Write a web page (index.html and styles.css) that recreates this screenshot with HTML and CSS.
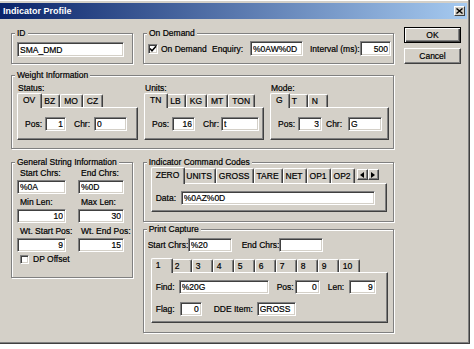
FILE: index.html
```html
<!DOCTYPE html>
<html lang="en">
<head>
    <meta charset="UTF-8">
    <title>Indicator Profile</title>
    <link rel="stylesheet" href="styles.css">
</head>
<body>
<div class="window">
    <div class="titlebar">
        <span class="title">Indicator Profile</span>
        <span class="close-btn">
            <svg width="7" height="6" viewBox="0 0 7 6"><path d="M0.5 0.5 L6.5 5.5 M6.5 0.5 L0.5 5.5" stroke="#000" stroke-width="1.4"/></svg>
        </span>
    </div>

    <div class="client">
        <div class="main">
            <!-- ID / On Demand -->
            <div class="row">
                <div class="group g-id">
                    <span class="legend">ID</span>
                    <input class="tb tb-id" value="SMA_DMD">
                </div>
                <div class="group g-demand">
                    <span class="legend">On Demand</span>
                    <span class="check">
                        <svg width="8" height="8" viewBox="0 0 8 8"><path d="M1 3.5 L3 5.8 L7 1.2" fill="none" stroke="#000" stroke-width="1.5"/></svg>
                    </span>
                    <span class="lbl l-ondemand">On Demand</span>
                    <span class="lbl l-enquiry">Enquiry:</span>
                    <input class="tb tb-enquiry" value="%0AW%0D">
                    <span class="lbl l-interval">Interval (ms):</span>
                    <input class="tb num tb-interval" value="500">
                </div>
            </div>

            <!-- Weight Information -->
            <div class="group g-weight">
                <span class="legend">Weight Information</span>
                <div class="sub sub-status">
                    <div class="sub-label">Status:</div>
                    <div class="tabs">
                        <span class="tab active">OV</span>
                        <span class="tab">BZ</span>
                        <span class="tab">MO</span>
                        <span class="tab">CZ</span>
                    </div>
                    <div class="panel">
                        <span class="lbl l-pos">Pos:</span>
                        <input class="tb num w21" value="1">
                        <span class="lbl l-chr">Chr:</span>
                        <input class="tb w33" value="0">
                    </div>
                </div>
                <div class="sub sub-units">
                    <div class="sub-label">Units:</div>
                    <div class="tabs">
                        <span class="tab active">TN</span>
                        <span class="tab">LB</span>
                        <span class="tab">KG</span>
                        <span class="tab">MT</span>
                        <span class="tab">TON</span>
                    </div>
                    <div class="panel">
                        <span class="lbl l-pos">Pos:</span>
                        <input class="tb num w23" value="16">
                        <span class="lbl l-chr narrow">Chr:</span>
                        <input class="tb w38" value="t">
                    </div>
                </div>
                <div class="sub sub-mode">
                    <div class="sub-label">Mode:</div>
                    <div class="tabs">
                        <span class="tab active">G</span>
                        <span class="tab w20">T</span>
                        <span class="tab w20">N</span>
                    </div>
                    <div class="panel">
                        <span class="lbl l-pos">Pos:</span>
                        <input class="tb num w24" value="3">
                        <span class="lbl l-chr tight">Chr:</span>
                        <input class="tb w34" value="G">
                    </div>
                </div>
            </div>

            <div class="row row-bottom">
                <!-- General String Information -->
                <div class="group g-general">
                    <span class="legend">General String Information</span>
                    <div class="gs-grid">
                        <div class="gs-field">
                            <span class="gs-lbl">Start Chrs:</span>
                            <input class="tb" value="%0A">
                        </div>
                        <div class="gs-field">
                            <span class="gs-lbl">End Chrs:</span>
                            <input class="tb" value="%0D">
                        </div>
                        <div class="gs-field">
                            <span class="gs-lbl">Min Len:</span>
                            <input class="tb num" value="10">
                        </div>
                        <div class="gs-field">
                            <span class="gs-lbl">Max Len:</span>
                            <input class="tb num" value="30">
                        </div>
                        <div class="gs-field">
                            <span class="gs-lbl">Wt. Start Pos:</span>
                            <input class="tb num" value="9">
                        </div>
                        <div class="gs-field">
                            <span class="gs-lbl">Wt. End Pos:</span>
                            <input class="tb num" value="15">
                        </div>
                    </div>
                    <div class="gs-check">
                        <span class="check empty"></span>
                        <span>DP Offset</span>
                    </div>
                </div>

                <div class="col-right">
                    <!-- Indicator Command Codes -->
                    <div class="group g-icc">
                        <span class="legend">Indicator Command Codes</span>
                        <div class="tabs tabs-lg">
                            <span class="tab active">ZERO</span>
                            <span class="tab">UNITS</span>
                            <span class="tab">GROSS</span>
                            <span class="tab">TARE</span>
                            <span class="tab">NET</span>
                            <span class="tab">OP1</span>
                            <span class="tab">OP2</span>
                            <span class="scroll">
                                <span class="arrow"><svg width="4" height="6" viewBox="0 0 4 6"><path d="M4 0 L0 3 L4 6 Z" fill="#000"/></svg></span>
                                <span class="arrow"><svg width="4" height="6" viewBox="0 0 4 6"><path d="M0 0 L4 3 L0 6 Z" fill="#000"/></svg></span>
                            </span>
                        </div>
                        <div class="panel icc-panel">
                            <span class="lbl l-data">Data:</span>
                            <input class="tb tb-data" value="%0AZ%0D">
                        </div>
                    </div>

                    <!-- Print Capture -->
                    <div class="group g-print">
                        <span class="legend">Print Capture</span>
                        <div class="pc-top">
                            <span class="lbl l-start">Start Chrs:</span>
                            <input class="tb w44" value="%20">
                            <span class="lbl l-end">End Chrs:</span>
                            <input class="tb w44" value="">
                        </div>
                        <div class="tabs pc-tabs">
                            <span class="tab active">1</span>
                            <span class="tab">2</span>
                            <span class="tab">3</span>
                            <span class="tab">4</span>
                            <span class="tab">5</span>
                            <span class="tab">6</span>
                            <span class="tab">7</span>
                            <span class="tab">8</span>
                            <span class="tab">9</span>
                            <span class="tab">10</span>
                        </div>
                        <div class="panel pc-panel">
                            <div class="pc-row">
                                <span class="lbl l-find">Find:</span>
                                <input class="tb w90" value="%20G">
                                <span class="lbl l-ppos">Pos:</span>
                                <input class="tb num w25" value="0">
                                <span class="lbl l-len">Len:</span>
                                <input class="tb num w27" value="9">
                            </div>
                            <div class="pc-row">
                                <span class="lbl l-flag">Flag:</span>
                                <input class="tb num w22" value="0">
                                <span class="lbl l-dde">DDE Item:</span>
                                <input class="tb w39" value="GROSS">
                            </div>
                        </div>
                    </div>
                </div>
            </div>
        </div>

        <div class="buttons">
            <span class="btn default">OK</span>
            <span class="btn">Cancel</span>
        </div>
    </div>
</div>
</body>
</html>
```

FILE: styles.css
```css
* {
    box-sizing: border-box;
}
body {
    margin: 0;
    background: #fff;
    font-family: "Liberation Sans", Arial, sans-serif;
    font-size: 8.5px;
    color: #000;
    -webkit-text-stroke: 0.2px #000;
}
.window {
    width: 470px;
    height: 344px;
    padding: 3px 2px 0 0;
    background: #d4d0c8;
    border-right: 1px solid #404040;
    border-bottom: 1px solid #404040;
    box-shadow: inset -1px -1px 0 #808080, inset 0 1px 0 #fff;
}
.titlebar {
    height: 16px;
    display: flex;
    align-items: center;
    justify-content: space-between;
    padding: 0 2px 0 3px;
    background: linear-gradient(to right, #0a246a, #a6caf0);
}
.title {
    color: #fff;
    font-weight: bold;
    font-size: 9px;
    -webkit-text-stroke: 0;
}
.close-btn {
    width: 11px;
    height: 10px;
    display: flex;
    align-items: center;
    justify-content: center;
    background: #d4d0c8;
    border: 1px solid;
    border-color: #fff #404040 #404040 #fff;
}

.client {
    display: flex;
    padding: 8px 0 0 11px;
}
.main {
    width: 383px;
    margin-top: 6px;
}
.row {
    display: flex;
    gap: 10px;
}

/* group boxes */
.group {
    position: relative;
    border: 1px solid #808080;
    box-shadow: inset 1px 1px 0 #fff, 1px 1px 0 #fff;
}
.legend {
    position: absolute;
    top: -6px;
    left: 3px;
    padding: 0 2px;
    line-height: 11px;
    background: #d4d0c8;
    white-space: nowrap;
}
.lbl {
    white-space: nowrap;
    flex: none;
}

/* text boxes */
.tb {
    height: 14px;
    margin: 0;
    padding: 0 2px;
    font: inherit;
    color: #000;
    background: #fff;
    border: 1px solid;
    border-color: #808080 #fff #fff #808080;
    box-shadow: inset 1px 1px 0 #404040, inset -1px -1px 0 #d4d0c8;
    outline: none;
    flex: none;
}
.tb.num {
    text-align: right;
}
.w21 { width: 21px; }
.w22 { width: 22px; }
.w23 { width: 23px; }
.w24 { width: 24px; }
.w25 { width: 25px; }
.w27 { width: 27px; }
.w33 { width: 33px; }
.w34 { width: 34px; }
.w38 { width: 38px; }
.w39 { width: 39px; }
.w44 { width: 44px; }
.w90 { width: 90px; }

.check {
    width: 10px;
    height: 10px;
    display: inline-flex;
    align-items: center;
    justify-content: center;
    flex: none;
    background: #fff;
    border: 1px solid;
    border-color: #808080 #fff #fff #808080;
    box-shadow: inset 1px 1px 0 #404040, inset -1px -1px 0 #d4d0c8;
}

/* ID / On Demand */
.g-id {
    width: 122px;
    height: 31px;
    padding: 8px 0 0 5px;
}
.tb-id {
    width: 107px;
    height: 15px;
}
.g-demand {
    width: 251px;
    height: 31px;
    display: flex;
    align-items: center;
    padding-left: 4px;
}
.l-ondemand { margin-left: 3px; width: 51px; }
.l-enquiry { width: 38px; }
.tb-enquiry { width: 53px; height: 15px; }
.l-interval { margin-left: 7px; width: 50px; }
.tb-interval { width: 31px; height: 15px; }

/* Weight Information */
.g-weight {
    margin-top: 11px;
    height: 74px;
    padding: 7px 0 0 5px;
    display: flex;
    gap: 6px;
}
.sub-status { width: 121px; }
.sub-units { width: 120px; }
.sub-mode { width: 119px; }
.sub-label {
    height: 10px;
    line-height: 10px;
    padding-left: 1px;
}

/* tabs */
.tabs {
    display: flex;
    align-items: flex-end;
    height: 14px;
    padding-left: 2px;
}
.tab {
    height: 13px;
    line-height: 12px;
    padding: 0 4px 0 3px;
    white-space: nowrap;
    border-top: 1px solid #fff;
    border-left: 1px solid #fff;
    border-right: 1px solid #404040;
    box-shadow: inset -1px 0 0 #808080;
    border-radius: 2px 2px 0 0;
}
.tab.active {
    position: relative;
    z-index: 1;
    height: 15px;
    margin: 0 -2px -1px;
    padding: 0 6px 0 5px;
    background: #d4d0c8;
}
.tab.w20 { width: 20px; }
.panel {
    border: 1px solid;
    border-color: #fff #404040 #404040 #fff;
    box-shadow: inset -1px -1px 0 #808080;
}
.sub .panel {
    height: 33px;
    display: flex;
    align-items: center;
    padding-left: 7px;
}
.l-pos { width: 20px; }
.l-chr { margin-left: 8px; width: 20px; }
.l-chr.narrow { width: 18px; }
.l-chr.tight { margin-left: 4px; width: 22px; }

/* General String Information */
.row-bottom {
    margin-top: 13px;
}
.g-general {
    width: 122px;
    height: 116px;
    padding: 4px 0 0 5px;
}
.gs-grid {
    display: grid;
    grid-template-columns: 49px 46px;
    column-gap: 12px;
    row-gap: 2px;
}
.gs-lbl {
    display: block;
    line-height: 12px;
    padding-left: 3px;
    white-space: nowrap;
}
.gs-field .tb {
    display: block;
    width: 100%;
    margin-top: 1px;
}
.gs-check {
    display: flex;
    align-items: center;
    gap: 4px;
    margin: 2px 0 0 3px;
}
.gs-check .check {
    width: 9px;
    height: 9px;
}

/* right column */
.col-right {
    width: 252px;
    display: flex;
    flex-direction: column;
    gap: 7px;
}
.g-icc {
    height: 60px;
    padding: 3px 0 0 7px;
}
.tabs-lg {
    height: 17px;
}
.tabs-lg .tab {
    height: 15px;
    line-height: 14px;
    padding: 0 3px 0 2px;
}
.tabs-lg .tab.active {
    height: 17px;
    padding: 0 5px 0 4px;
}
.scroll {
    display: flex;
    align-self: flex-start;
    margin: 3px 0 0 2px;
}
.arrow {
    width: 11px;
    height: 11px;
    display: flex;
    align-items: center;
    justify-content: center;
    background: #d4d0c8;
    border: 1px solid;
    border-color: #fff #404040 #404040 #fff;
    box-shadow: inset -1px -1px 0 #808080;
}
.icc-panel {
    width: 236px;
    height: 29px;
    display: flex;
    align-items: center;
    padding-left: 4px;
}
.l-data { width: 25px; }
.tb-data { width: 194px; }

/* Print Capture */
.g-print {
    height: 104px;
    padding: 8px 0 0 4px;
}
.pc-top {
    display: flex;
    align-items: center;
    height: 14px;
}
.l-start { width: 40px; }
.l-end { margin-left: 10px; width: 37px; }
.pc-tabs {
    margin: 5px 0 0 3px;
    height: 15px;
}
.pc-tabs .tab {
    width: 21px;
}
.pc-tabs .tab.active {
    width: 22px;
    padding-left: 4px;
}
.pc-panel {
    width: 237px;
    height: 51px;
    margin-left: 3px;
    padding: 7px 0 0 4px;
}
.pc-row {
    display: flex;
    align-items: center;
    height: 14px;
}
.pc-row + .pc-row {
    margin-top: 8px;
}
.l-find { width: 23px; }
.l-ppos { margin-left: 8px; width: 18px; }
.l-len { margin-left: 8px; width: 21px; }
.l-flag { width: 24px; }
.l-dde { margin-left: 12px; width: 43px; }

/* buttons */
.buttons {
    margin-left: 10px;
    display: flex;
    flex-direction: column;
    gap: 5px;
}
.btn {
    width: 57px;
    height: 16px;
    display: flex;
    align-items: center;
    justify-content: center;
    background: #d4d0c8;
    border: 1px solid;
    border-color: #fff #404040 #404040 #fff;
    box-shadow: inset -1px -1px 0 #808080;
}
.btn.default {
    border: 1px solid #000;
    box-shadow: inset 1px 1px 0 #fff, inset -1px -1px 0 #404040, inset -2px -2px 0 #808080;
}
```
